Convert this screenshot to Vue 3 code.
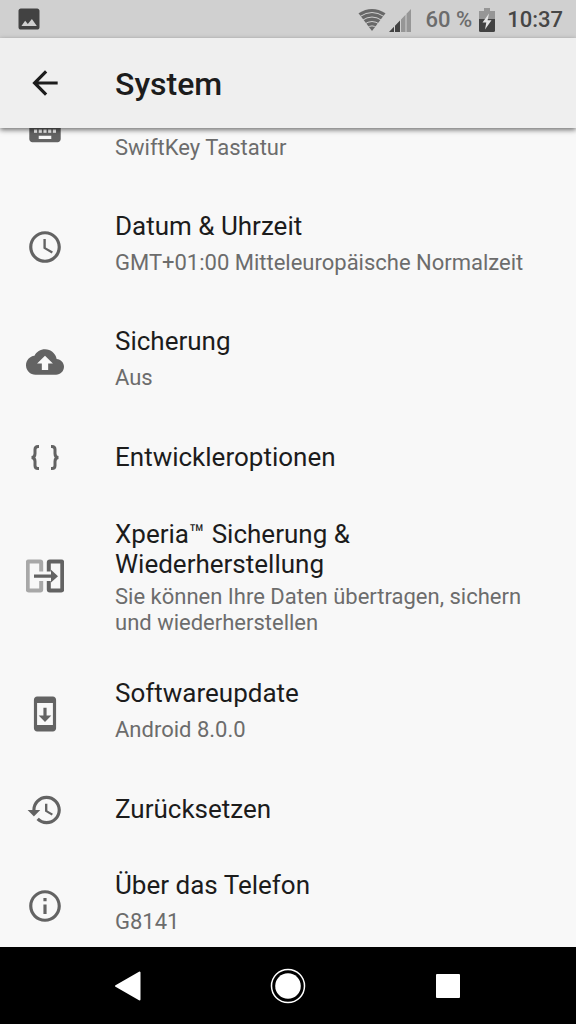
<script setup>
const items = [
  { icon: 'clock', title: 'Datum & Uhrzeit', summary: 'GMT+01:00 Mitteleuropäische Normalzeit' },
  { icon: 'cloud', title: 'Sicherung', summary: 'Aus' },
  { icon: 'braces', title: 'Entwickleroptionen' },
  {
    icon: 'transfer',
    title: 'Xperia™ Sicherung & Wiederherstellung',
    summary: 'Sie können Ihre Daten übertragen, sichern und wiederherstellen',
    long: true
  },
  { icon: 'update', title: 'Softwareupdate', summary: 'Android 8.0.0' },
  { icon: 'restore', title: 'Zurücksetzen' },
  { icon: 'info', title: 'Über das Telefon', summary: 'G8141' }
]

const paths = {
  clock: 'M11.99 2C6.47 2 2 6.48 2 12s4.47 10 9.99 10C17.52 22 22 17.52 22 12S17.52 2 11.99 2zM12 20c-4.42 0-8-3.58-8-8s3.58-8 8-8 8 3.58 8 8-3.58 8-8 8zM12.5 7H11v6l5.25 3.15.75-1.23-4.5-2.67z',
  cloud: 'M19.35 10.04C18.67 6.59 15.64 4 12 4 9.11 4 6.6 5.64 5.35 8.04 2.34 8.36 0 10.91 0 14c0 3.31 2.69 6 6 6h13c2.76 0 5-2.24 5-5 0-2.64-2.05-4.78-4.65-4.96zM14 13v4h-4v-4H7l5-5 5 5h-3z',
  update: 'M17 1.01L7 1c-1.1 0-2 .9-2 2v18c0 1.1.9 2 2 2h10c1.1 0 2-.9 2-2V3c0-1.1-.9-1.99-2-1.99zM17 19H7V5h10v14zm-1-6h-3V8h-2v5H8l4 4 4-4z',
  restore: 'M13 3c-4.97 0-9 4.03-9 9H1l3.89 3.89.07.14L9 12H6c0-3.87 3.13-7 7-7s7 3.13 7 7-3.13 7-7 7c-1.93 0-3.68-.79-4.94-2.06l-1.42 1.42C8.27 19.99 10.51 21 13 21c4.97 0 9-4.03 9-9s-4.03-9-9-9zm-1 5v5l4.28 2.54.72-1.21-3.5-2.08V8H12z',
  info: 'M11 17h2v-6h-2v6zm1-15C6.48 2 2 6.48 2 12s4.48 10 10 10 10-4.48 10-10S17.52 2 12 2zm0 18c-4.41 0-8-3.59-8-8s3.59-8 8-8 8 3.59 8 8-3.59 8-8 8zM11 9h2V7h-2v2z'
}
</script>

<template>
  <div class="screen">
    <div class="status">
      <svg class="status-image" viewBox="0 0 24 24" aria-hidden="true">
        <path d="M21 19V5c0-1.1-.9-2-2-2H5c-1.1 0-2 .9-2 2v14c0 1.1.9 2 2 2h14c1.1 0 2-.9 2-2zM5.500 18l3.200-4.500 2.300 2.700L14.500 12l4.200 6z" />
      </svg>
      <div class="status-right">
        <svg class="wifi" viewBox="0 0 28 24" aria-hidden="true">
          <path class="wifi-fan" d="M14 23L.5 5.300Q14-3.300 27.500 5.300z" />
          <g class="wifi-gaps">
            <path d="M2 8.500Q14 .5 26 8.500" />
            <path d="M4 12.500Q14 5.500 24 12.500" />
            <path d="M6 16.500Q14 10.500 22 16.500" />
            <path d="M9 19.800Q14 16 19 19.800" />
          </g>
        </svg>
        <svg class="signal" viewBox="0 0 22 23" aria-hidden="true">
          <path class="dark" d="M0 23L5 17.800V23zM6 16.700L11 11.500V23H6z" />
          <path class="pale" d="M12 10.400L16.500 5.700V23H12zM17.500 4.700L22 0V23H17.500z" />
        </svg>
        <span class="percent">60 %</span>
        <svg class="battery" viewBox="0 0 16 24" aria-hidden="true">
          <path class="pale" d="M5 0h6v3h5v8H0V3h5z" />
          <path class="dark" d="M0 11h16v11.500q0 1.500-1.500 1.500h-13Q0 24 0 22.500z" />
          <path class="bolt" d="M10 5.500L3.500 14.500H7.300L6 21.500L12.500 12.200H8.600z" />
        </svg>
        <time class="time">10:37</time>
      </div>
    </div>

    <header class="bar">
      <button class="back" type="button" aria-label="Zurück">
        <svg class="icon" viewBox="0 0 24 24" aria-hidden="true">
          <path d="M20 11H7.83l5.59-5.59L12 4l-8 8 8 8 1.41-1.41L7.83 13H20v-2z" />
        </svg>
      </button>
      <h1>System</h1>
    </header>

    <main class="content">
      <ul class="list">
        <li>
          <button class="row row-cut" type="button">
            <svg class="icon icon-cut" viewBox="0 10 24 14" aria-hidden="true">
              <path d="M20 5H4c-1.1 0-1.99.9-1.99 2L2 17c0 1.1.9 2 2 2h16c1.1 0 2-.9 2-2V7c0-1.1-.9-2-2-2zm-9 3h2v2h-2V8zm0 3h2v2h-2v-2zM8 8h2v2H8V8zm0 3h2v2H8v-2zm-1 2H5v-2h2v2zm0-3H5V8h2v2zm9 7H8v-2h8v2zm0-4h-2v-2h2v2zm0-3h-2V8h2v2zm3 3h-2v-2h2v2zm0-3h-2V8h2v2z" />
            </svg>
            <span class="text"><span class="summary">SwiftKey Tastatur</span></span>
          </button>
        </li>
        <li v-for="item in items" :key="item.title">
          <button class="row" :class="{ single: !item.summary, long: item.long }" type="button">
            <svg v-if="item.icon === 'braces'" class="icon" viewBox="0 0 38 38" aria-hidden="true">
              <g class="brace">
                <path d="M13 7.500h-1q-3 0-3 3v4q0 4-3.500 4q3.500 0 3.500 4v4q0 3 3 3h1" />
                <path d="M25 7.500h1q3 0 3 3v4q0 4 3.500 4q-3.500 0-3.500 4v4q0 3-3 3h-1" />
              </g>
            </svg>
            <svg v-else-if="item.icon === 'transfer'" class="icon" viewBox="0 0 38 38" aria-hidden="true">
              <path class="phone phone-old" d="M15.200 14.500V5.500q0-1-1-1H2.700q-1 0-1 1V32.500q0 1 1 1h11.500q1 0 1-1V24" />
              <path class="phone" d="M22.800 14.500V5.500q0-1 1-1H35.300q1 0 1 1V32.500q0 1-1 1H23.800q-1 0-1-1V24" />
              <path d="M2 3.500h13v2.500H2zM2 32h13v2.500H2z" class="old-fill" />
              <path d="M23 3.500h13v2.500H23zM23 32h13v2.500H23zM8 17.500H25V12.700L32 19.200L25 25.500V20.800H8z" />
            </svg>
            <svg v-else class="icon" viewBox="0 0 24 24" aria-hidden="true">
              <path :d="paths[item.icon]" />
            </svg>
            <span class="text">
              <span class="title">{{ item.title }}</span>
              <span v-if="item.summary" class="summary">{{ item.summary }}</span>
            </span>
          </button>
        </li>
      </ul>
    </main>

    <nav class="nav" aria-label="Navigation">
      <button type="button" aria-label="Zurück">
        <svg viewBox="0 0 36 36" aria-hidden="true">
          <path class="round" d="M6 18L29.500 4.500V31.500z" />
        </svg>
      </button>
      <button type="button" aria-label="Startseite">
        <svg viewBox="0 0 36 36" aria-hidden="true">
          <circle class="ring" cx="18" cy="18" r="16.500" />
          <circle cx="18" cy="18" r="12.800" />
        </svg>
      </button>
      <button type="button" aria-label="Übersicht">
        <svg viewBox="0 0 36 36" aria-hidden="true">
          <rect x="6" y="6" width="24" height="24" rx="1" />
        </svg>
      </button>
    </nav>
  </div>
</template>

<style>
body {
  background: #f8f8f8;
}
</style>

<style scoped>
.screen {
  display: flex;
  flex-direction: column;
  height: 100vh;
  background: #f8f8f8;
  color: #1c1c1c;
  font-family: Roboto, "Noto Sans", sans-serif;
}

button {
  margin: 0;
  padding: 0;
  border: 0;
  background: none;
  color: inherit;
  font: inherit;
  text-align: left;
}

svg {
  display: block;
  flex: none;
}

.status {
  display: flex;
  flex: none;
  align-items: center;
  justify-content: space-between;
  height: 38px;
  padding: 0 13px 0 15px;
  background: #d0d0d0;
  color: #464646;
  font-size: 22px;
  font-weight: 500;
  line-height: 24px;
}

.status-image {
  width: 28px;
  height: 28px;
  fill: #424242;
}

.status-right {
  display: flex;
  align-items: center;
  padding-top: 2px;
}

.wifi {
  width: 28px;
  height: 24px;
  margin-right: 3px;
}

.wifi-fan {
  fill: #686868;
}

.wifi-gaps {
  fill: none;
  stroke: #d0d0d0;
  stroke-width: 1;
}

.signal {
  width: 22px;
  height: 23px;
  margin-right: 14px;
}

.dark {
  fill: #424242;
}

.pale {
  fill: #969696;
}

.bolt {
  fill: #e4e4e4;
}

.percent {
  color: #6c6c6c;
}

.battery {
  width: 16px;
  height: 24px;
  margin: 0 12px 0 7px;
}

.bar {
  position: relative;
  z-index: 1;
  display: flex;
  flex: none;
  align-items: center;
  height: 90px;
  padding: 0 26px;
  background: #efefef;
  box-shadow: 0 2px 5px rgba(0, 0, 0, 0.55);
}

.back {
  margin-right: 51px;
}

h1 {
  margin: 0;
  padding-top: 2px;
  font-size: 32px;
  font-weight: 500;
  line-height: 38px;
}

.icon {
  width: 38px;
  height: 38px;
  fill: #636363;
}

.back .icon {
  fill: #1c1c1c;
}

.content {
  flex: 1;
  min-height: 0;
  overflow: hidden;
}

.list {
  margin: 0;
  padding: 0;
  list-style: none;
}

.row {
  display: flex;
  align-items: center;
  gap: 51px;
  width: 100%;
  min-height: 115px;
  padding: 0 26px;
}

.row.single {
  min-height: 77px;
}

.row.long {
  min-height: 160px;
}

.row.row-cut {
  align-items: flex-start;
  min-height: 61px;
}

.icon-cut {
  height: 22px;
}

.text {
  display: flex;
  flex: 1;
  flex-direction: column;
  gap: 9px;
  min-width: 0;
  padding-bottom: 7px;
}

.single .text {
  padding-bottom: 2px;
}

.long .text {
  gap: 5px;
  padding: 3px 0 0;
}

.row-cut .text {
  padding: 7px 0 0;
}

.title {
  font-size: 26px;
  line-height: 30px;
}

.summary {
  color: #6c6c6c;
  font-size: 22px;
  line-height: 26px;
}

.brace {
  fill: none;
  stroke: #636363;
  stroke-width: 3;
}

.phone {
  fill: none;
  stroke: #636363;
  stroke-width: 4;
}

.phone-old {
  stroke: #a8a8a8;
}

.old-fill {
  fill: #a8a8a8;
}

.nav {
  display: flex;
  flex: none;
  align-items: center;
  justify-content: center;
  height: 77px;
  background: #000;
}

.nav button {
  display: flex;
  flex: 0 1 160px;
  align-items: center;
  justify-content: center;
  height: 77px;
}

.nav svg {
  width: 36px;
  height: 36px;
  fill: #fff;
}

.round {
  stroke: #fff;
  stroke-width: 2;
  stroke-linejoin: round;
}

.ring {
  fill: none;
  stroke: #fff;
  stroke-width: 1.5;
}
</style>
